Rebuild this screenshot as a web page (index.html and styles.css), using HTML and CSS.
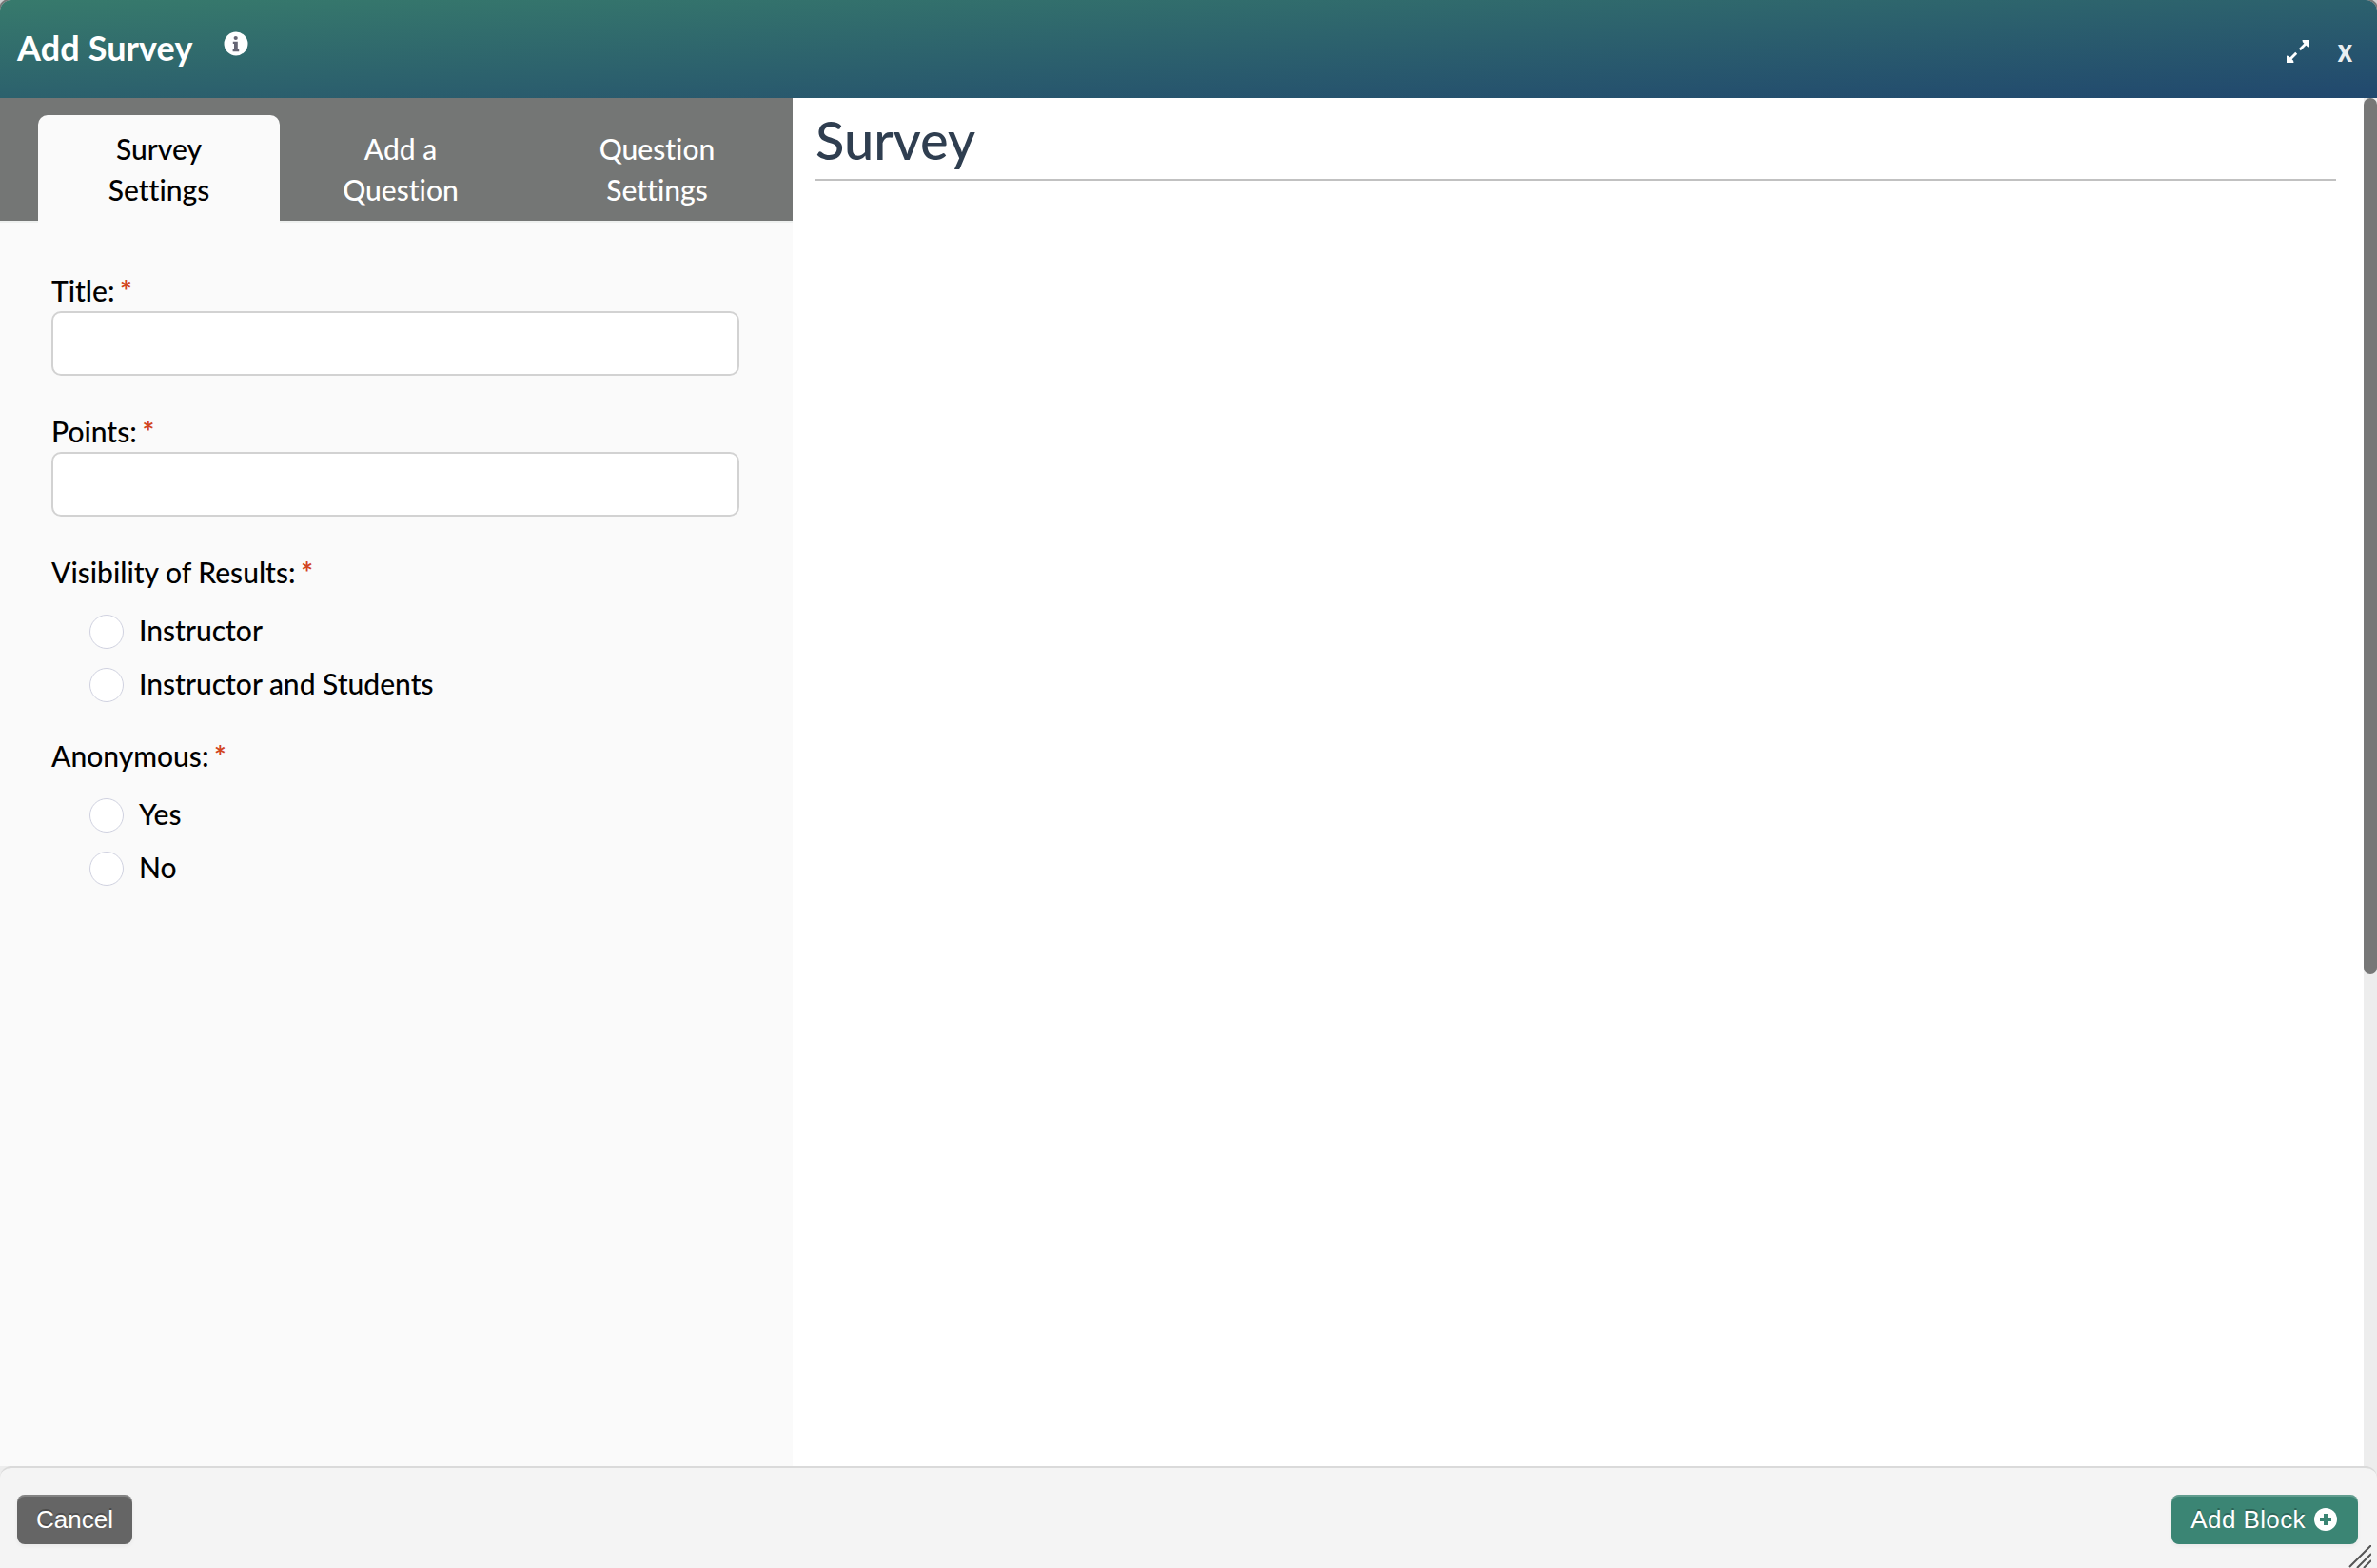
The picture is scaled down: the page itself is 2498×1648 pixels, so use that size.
FILE: index.html
```html
<!DOCTYPE html>
<html lang="en">
<head>
  <meta charset="UTF-8" />
  <meta name="viewport" content="width=device-width, initial-scale=1" />
  <title>Add Survey</title>
  <link rel="stylesheet" href="styles.css">
</head>
<body>

  <div class="modal">
    <!-- Header -->
    <header class="modal-header">
      <h1 class="modal-title">Add Survey</h1>
      <svg class="info-icon" viewBox="0 0 26 26">
        <circle cx="13" cy="13" r="12.5" fill="#fff" />
        <circle cx="12.7" cy="7" r="2.1" fill="#666674" />
        <path d="M9.8 10.8h5v8.2h1.4v2.2H9.6V19H11v-6.1H9.8z" fill="#666674" />
      </svg>
      <div class="header-actions">
        <svg class="expand-icon" viewBox="0 0 24 24">
          <path d="M13.8 10.2L21 3M10.2 13.8L3 21" stroke="#fff" stroke-width="2.8" fill="none" />
          <path d="M16.5 0H24v7.500l-2.200-.4-4.900-4.900zM0 16.500V24h7.500l-.4-2.200-4.900-4.900z" fill="#fff" />
        </svg>
        <span class="close">x</span>
      </div>
    </header>

    <!-- Body -->
    <div class="modal-body">
      <aside class="sidebar">
        <nav class="tabs">
          <div class="tab active">Survey<br>Settings</div>
          <div class="tab">Add a<br>Question</div>
          <div class="tab">Question<br>Settings</div>
        </nav>
        <form class="settings">
          <div class="field">
            <label for="title">Title: <span class="required">*</span></label>
            <input type="text" id="title">
          </div>
          <div class="field">
            <label for="points">Points: <span class="required">*</span></label>
            <input type="text" id="points">
          </div>
          <div class="group">
            <div class="group-label">Visibility of Results: <span class="required">*</span></div>
            <label class="option"><input type="radio" name="visibility">Instructor</label>
            <label class="option"><input type="radio" name="visibility">Instructor and Students</label>
          </div>
          <div class="group">
            <div class="group-label">Anonymous: <span class="required">*</span></div>
            <label class="option"><input type="radio" name="anonymous">Yes</label>
            <label class="option"><input type="radio" name="anonymous">No</label>
          </div>
        </form>
      </aside>
      <main class="preview">
        <h2 class="preview-title">Survey</h2>
      </main>
      <div class="scrollbar"><div class="scroll-thumb"></div></div>
    </div>

    <!-- Footer -->
    <div class="footer-wrap">
      <footer class="modal-footer">
        <button class="button cancel-button">Cancel</button>
        <button class="button add-button">
          Add Block
          <svg class="plus-icon" viewBox="0 0 24 24">
            <circle cx="12" cy="12" r="12" fill="#fff" />
            <path d="M12 6v12M6 12h12" stroke="#3b8574" stroke-width="4" />
          </svg>
        </button>
      </footer>
      <svg class="resize-handle" viewBox="0 0 24 24">
        <path d="M1 23L24 0M9 24L24 9M16 24L24 16" stroke="#555" stroke-width="2" />
      </svg>
    </div>
  </div>

</body>
</html>
```
FILE: styles.css
```css
* {
  box-sizing: border-box;
}

body {
  margin: 0;
  background: #d0d0d0;
  font-family: Lato, sans-serif;
  font-size: 30px;
  font-weight: 500;
  line-height: 43px;
  font-variant-ligatures: none;
  color: #000;
}

.modal {
  display: flex;
  flex-direction: column;
  height: 100vh;
  overflow: hidden;
}

.modal-header {
  display: flex;
  flex: none;
  height: 103px;
  padding: 0 24px 0 18px;
  border-radius: 12px 12px 0 0;
  box-shadow: 0 0 0 2px #777;
  background: linear-gradient(to bottom right, #377a6c, #21486e);
  color: #fff;
}

.modal-title {
  width: 185px;
  margin: 28px 0 0;
  font-size: 36px;
  font-weight: 700;
  line-height: 44px;
  letter-spacing: 0.1px;
  white-space: nowrap;
}

.info-icon {
  width: 26px;
  height: 26px;
  margin: 33px 0 0 32px;
}

.header-actions {
  display: flex;
  margin-left: auto;
}

.expand-icon {
  width: 24px;
  height: 24px;
  margin: 42px 28px 0 0;
}

.close {
  margin-top: 30px;
  font-size: 35px;
  font-weight: 900;
  line-height: 43px;
  opacity: 0.9;
  transform: scaleX(0.82);
}

.modal-body {
  display: flex;
  flex: 1;
  background: #fff;
}

.sidebar {
  width: 833px;
  background: #fafafa;
}

.tabs {
  display: grid;
  grid-template-columns: 254px 254px 1fr;
  height: 131px;
  padding: 18px 0 0 40px;
  background: #747675;
  border-bottom: 2px solid #eef0ef;
}

.tab {
  height: 111px;
  padding-top: 14px;
  text-align: center;
  color: #fff;
}

.tab.active {
  height: 113px;
  border-radius: 10px 10px 0 0;
  background: #fafafa;
  color: #000;
}

.settings {
  padding: 50px 56px 0 54px;
}

.field {
  height: 148px;
}

.field label {
  display: block;
  height: 43px;
}

.field input {
  display: block;
  width: 100%;
  height: 68px;
  border: 2px solid #d2d2d2;
  border-radius: 10px;
  background: #fff;
}

.required {
  margin-left: -2px;
  font-weight: 700;
  color: #d2451e;
}

.group {
  height: 193px;
}

.group-label {
  height: 54px;
}

.option {
  display: flex;
  align-items: center;
  height: 56px;
  padding-left: 40px;
}

.option input {
  appearance: none;
  width: 36px;
  height: 36px;
  margin: 4px 16px 0 0;
  border: 1px solid #d0d2e0;
  border-radius: 50%;
  background: #fff;
}

.preview {
  flex: 1;
  padding: 13px 29px 0 24px;
}

.preview-title {
  height: 74px;
  margin: 0;
  border-bottom: 2px solid #c1c1c1;
  font-size: 56px;
  font-weight: 500;
  line-height: 62px;
  color: #2f3e50;
}

.scrollbar {
  width: 14px;
  background: #ededed;
}

.scroll-thumb {
  height: 921px;
  border-radius: 7px;
  background: #777;
}

.footer-wrap {
  position: relative;
  flex: none;
  height: 107px;
  background: #ededed;
}

.modal-footer {
  display: flex;
  justify-content: space-between;
  height: 107px;
  padding: 28px 20px 0 18px;
  border-top: 2px solid #dadada;
  border-radius: 12px 12px 0 0;
  background: #f4f4f4;
}

.button {
  display: flex;
  align-items: center;
  height: 52px;
  padding: 0 20px;
  border: none;
  border-radius: 8px;
  font-family: "Liberation Sans", Arial, sans-serif;
  font-size: 26px;
  color: #fff;
  text-shadow: 0 -2px 0 rgba(0, 0, 0, 0.25);
  box-shadow: inset 0 2px 0 rgba(255, 255, 255, 0.2), 0 2px 4px rgba(0, 0, 0, 0.05);
}

.cancel-button {
  background: #656565;
}

.add-button {
  padding-right: 22px;
  letter-spacing: 0.4px;
  background: #3b8574;
}

.plus-icon {
  width: 24px;
  height: 24px;
  margin-left: 9px;
}

.resize-handle {
  position: absolute;
  right: 6px;
  bottom: 0;
  width: 24px;
  height: 24px;
}
```
